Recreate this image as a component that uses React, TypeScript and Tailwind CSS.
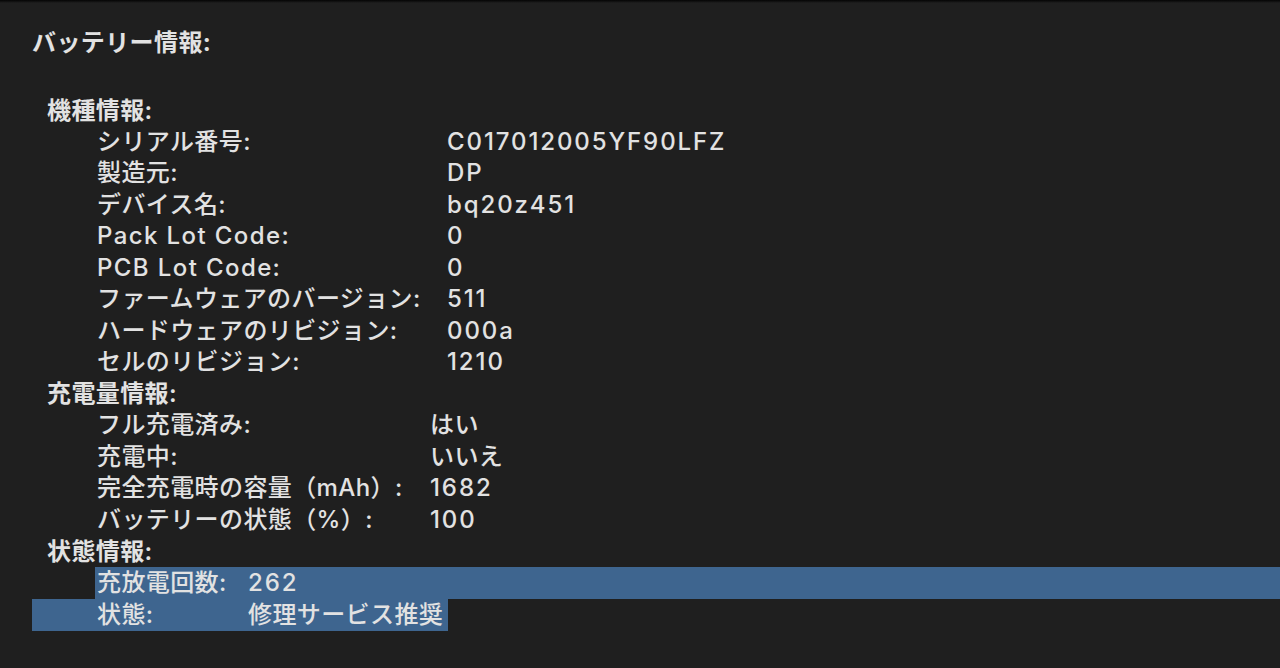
import React from 'react';

type Row = { label: string; value: string };

const FONT = 'font-["Inter","Noto_Sans_CJK_JP",sans-serif]';

const modelInfo: Row[] = [
  { label: 'シリアル番号:', value: 'C017012005YF90LFZ' },
  { label: '製造元:', value: 'DP' },
  { label: 'デバイス名:', value: 'bq20z451' },
  { label: 'Pack Lot Code:', value: '0' },
  { label: 'PCB Lot Code:', value: '0' },
  { label: 'ファームウェアのバージョン:', value: '511' },
  { label: 'ハードウェアのリビジョン:', value: '000a' },
  { label: 'セルのリビジョン:', value: '1210' },
];

const chargeInfo: Row[] = [
  { label: 'フル充電済み:', value: 'はい' },
  { label: '充電中:', value: 'いいえ' },
  { label: '完全充電時の容量（mAh）:', value: '1682' },
  { label: 'バッテリーの状態（%）:', value: '100' },
];

// SF-style latin runs a bit wider than Inter
const isLatin = (s: string) => /^[\x20-\x7e]+$/.test(s);
const labelTrack = (s: string) => (isLatin(s) ? 'tracking-[1.4px]' : 'tracking-[0.4px]');
const valueTrack = (s: string) => (isLatin(s) ? 'tracking-[1.9px]' : 'tracking-[0.4px]');

function Heading({ children }: { children: React.ReactNode }) {
  return <div className="h-[31.5px] pl-[47px] leading-[31.5px] font-semibold">{children}</div>;
}

function InfoRow({ row, labelWidth }: { row: Row; labelWidth: string }) {
  return (
    <div className="flex h-[31.5px] items-center pl-[97px]">
      <span className={`${labelWidth} ${labelTrack(row.label)} shrink-0 whitespace-nowrap`}>{row.label}</span>
      <span className={`${valueTrack(row.value)} whitespace-nowrap`}>{row.value}</span>
    </div>
  );
}

export default function App() {
  return (
    <div
      className={`relative h-[668px] w-[1280px] overflow-hidden bg-[#1f1f1f] text-[24px] font-medium tracking-[0.4px] text-[#e2e2e2] ${FONT}`}
    >
      {/* top window edge */}
      <div className="h-[3px] bg-gradient-to-b from-[#050505] to-[#1f1f1f]" />

      <div className="pt-[24px]">
        <div className="h-[31.5px] pl-[32px] font-bold leading-[31.5px]">バッテリー情報:</div>

        <div className="mt-[36px]">
          <Heading>機種情報:</Heading>
          {modelInfo.map((r) => (
            <InfoRow key={r.label} row={r} labelWidth="w-[350px]" />
          ))}

          <Heading>充電量情報:</Heading>
          {chargeInfo.map((r) => (
            <InfoRow key={r.label} row={r} labelWidth="w-[333px]" />
          ))}

          <Heading>状態情報:</Heading>
          {/* selected rows */}
          <div className="ml-[95px] flex h-[32px] items-center bg-[#3e658f] pl-[2px]">
            <span className="w-[151px] shrink-0">充放電回数:</span>
            <span className="tracking-[1.9px]">262</span>
          </div>
          <div className="ml-[32px] flex h-[32px] w-[416px] items-center bg-[#3e658f] pl-[65px]">
            <span className="w-[151px] shrink-0">状態:</span>
            <span className="whitespace-nowrap">修理サービス推奨</span>
          </div>
        </div>
      </div>
    </div>
  );
}
